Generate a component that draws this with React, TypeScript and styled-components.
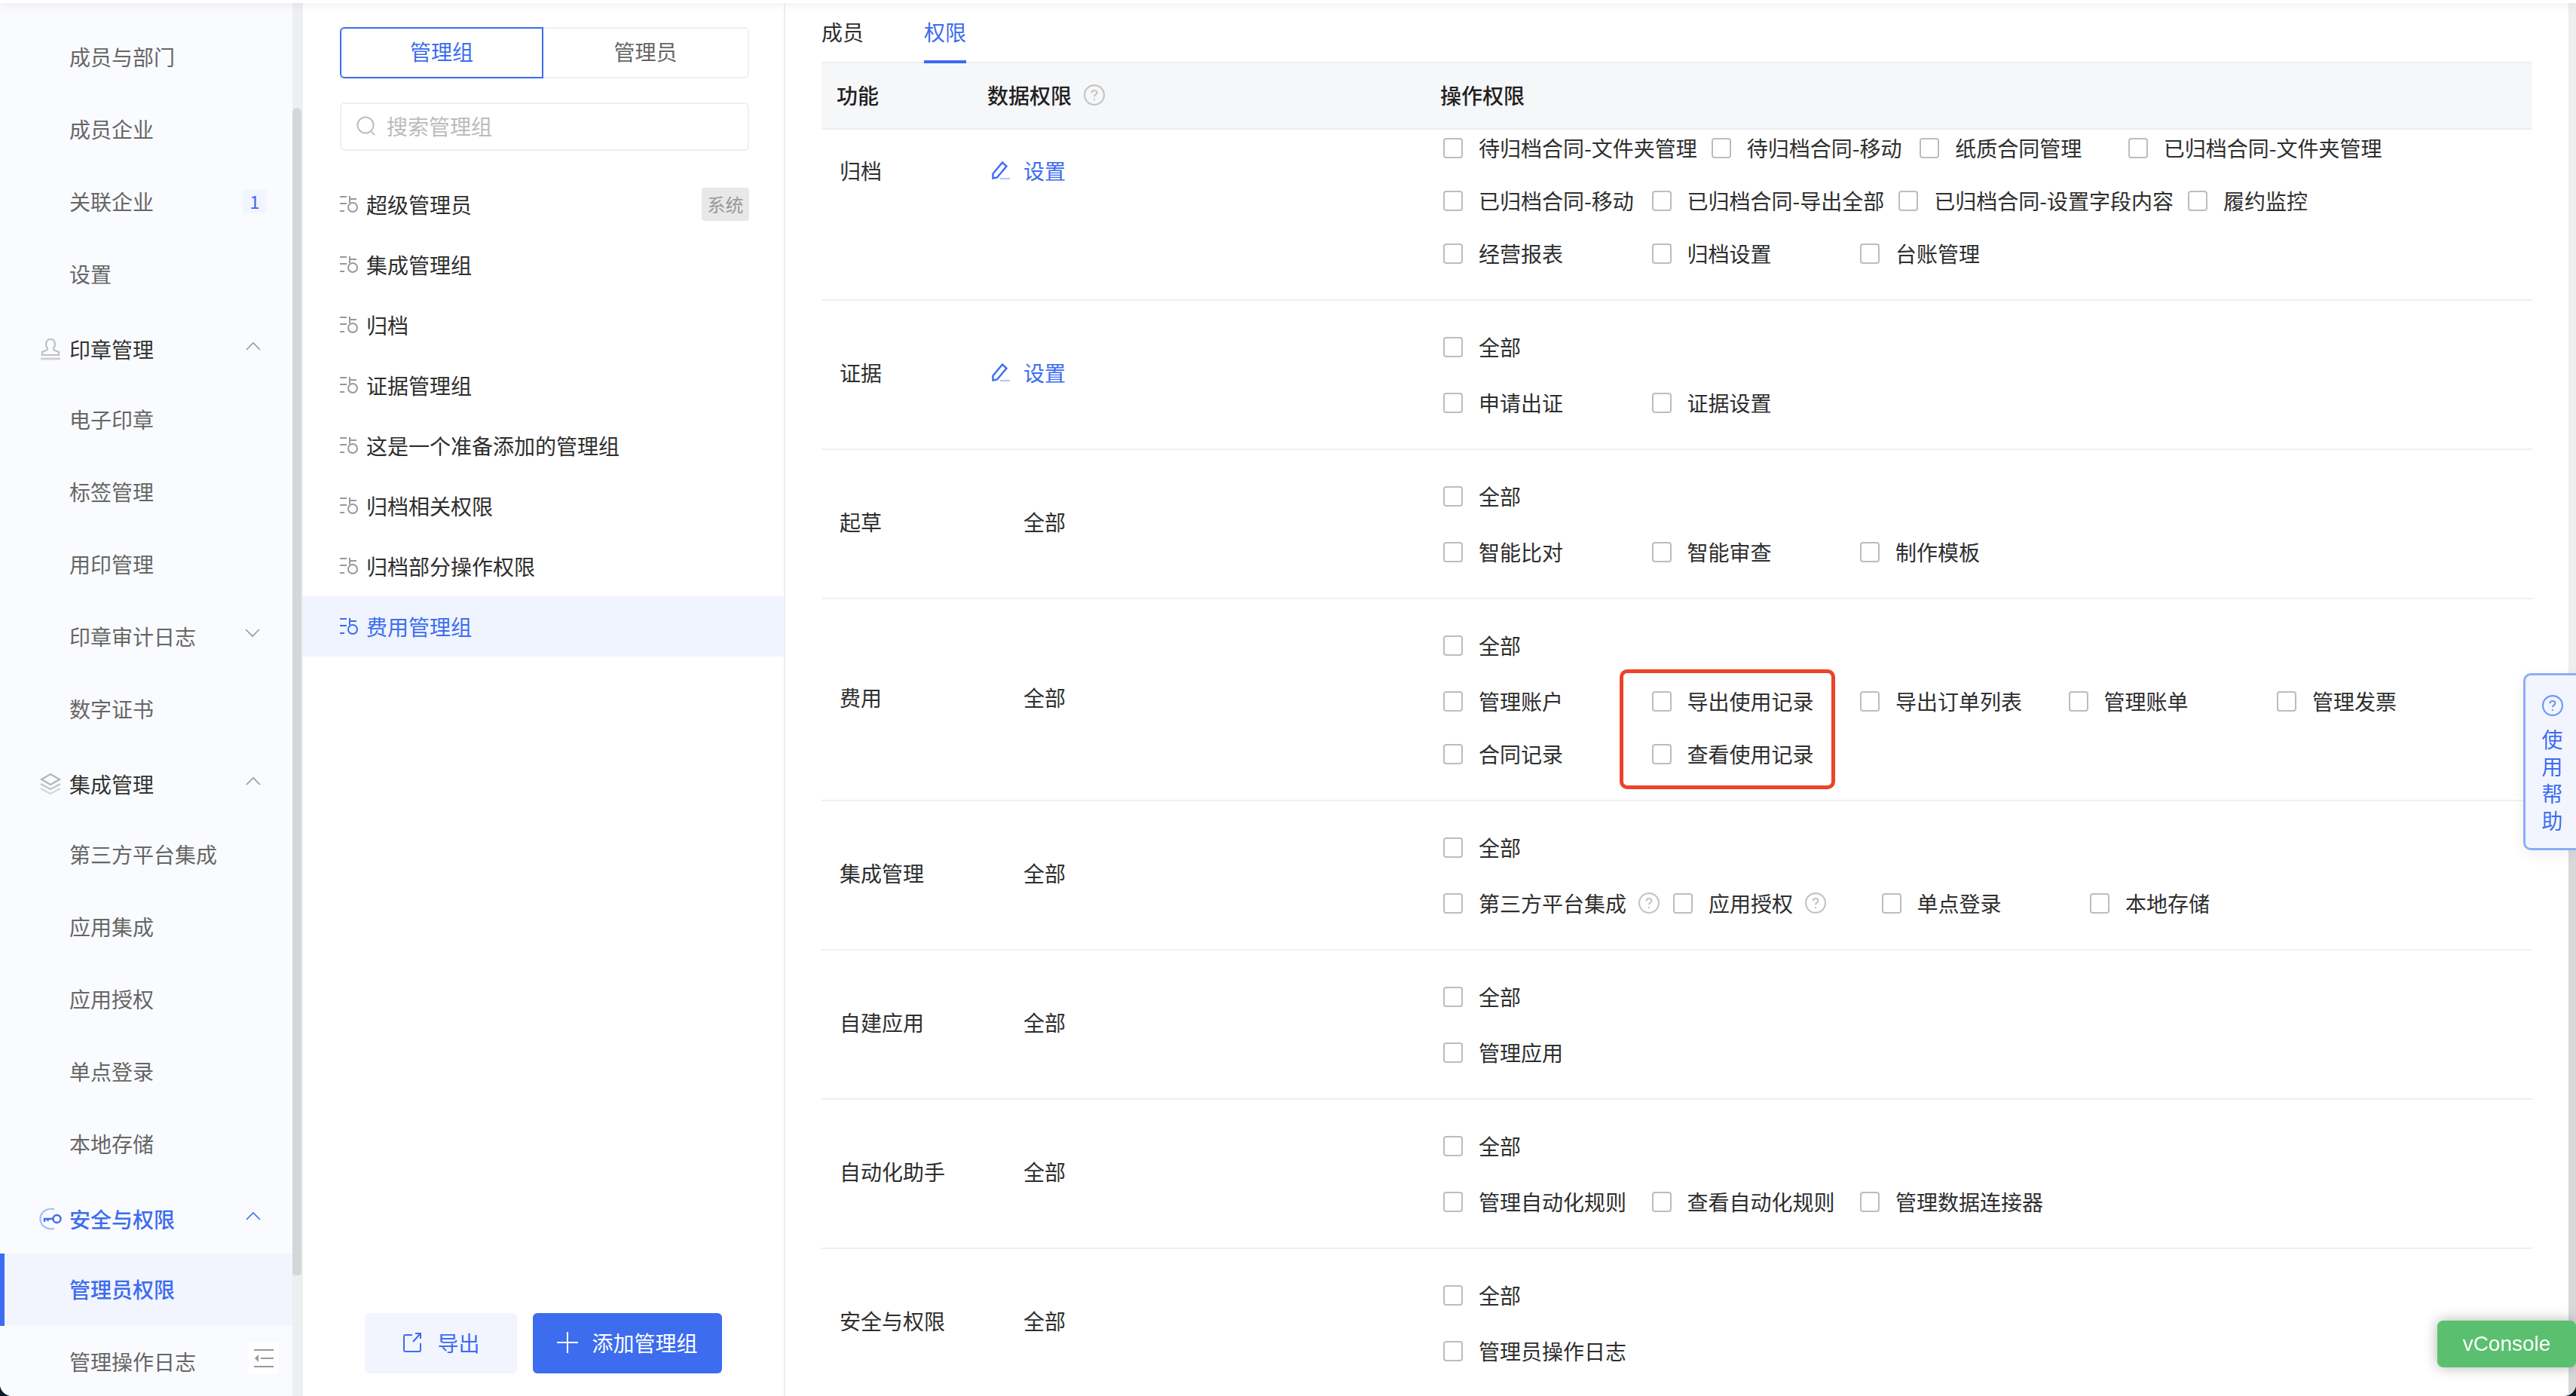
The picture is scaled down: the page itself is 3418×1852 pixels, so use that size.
import React from 'react'
import styled, { createGlobalStyle } from 'styled-components'

const BLUE = '#3c6cf0'
const LINE = '#eeeff3'

const GlobalStyle = createGlobalStyle`
  html, body {
    margin: 0;
    padding: 0;
    background: #0d1b26;
  }
  body {
    font-family: "Noto Sans CJK SC", "Noto Sans", sans-serif;
    font-size: 28px;
    line-height: 40px;
    color: #333;
  }
  * {
    box-sizing: border-box;
  }
`

const Page = styled.div`
  width: 3418px;
  height: 1852px;
  display: flex;
  flex-direction: column;
  background: #fff;
  overflow: hidden;
  border-radius: 0 0 16px 16px;
`

const TopBar = styled.div`
  height: 4px;
  flex: none;
  background: #fff;
  box-shadow: 0 2px 12px rgba(0, 0, 0, 0.12);
  position: relative;
  z-index: 2;
`

const Body = styled.div`
  flex: 1;
  min-height: 0;
  display: flex;
`

/* left nav */
const Sidebar = styled.nav`
  width: 388px;
  flex: none;
  padding-top: 24px;
  background: #fafbfe;
  position: relative;
  overflow: hidden;
`

const NavItem = styled.div<{ $active?: boolean }>`
  height: 96px;
  padding: 0 0 2px ${p => (p.$active ? 86 : 92)}px;
  display: flex;
  align-items: center;
  color: ${p => (p.$active ? BLUE : '#666')};
  font-weight: ${p => (p.$active ? 500 : 400)};
  background: ${p => (p.$active ? '#f2f5fd' : 'transparent')};
  border-left: ${p => (p.$active ? `6px solid ${BLUE}` : 'none')};
`

const NavBadge = styled.span`
  width: 32px;
  height: 32px;
  margin-left: 118px;
  border-radius: 4px;
  background: #f2f5fd;
  color: ${BLUE};
  font-size: 24px;
  line-height: 32px;
  text-align: center;
`

const NavGroup = styled.div<{ $active?: boolean }>`
  height: 97px;
  padding: 5px 0 0 52px;
  display: flex;
  align-items: center;
  color: ${p => (p.$active ? BLUE : '#333')};
  font-weight: ${p => (p.$active ? 500 : 400)};

  svg:first-child {
    width: 30px;
    height: 30px;
    margin-right: 10px;
    flex: none;
  }
`

const NavLabel = styled.span`
  flex: 1;
`

const Chevron = styled.svg<{ $down?: boolean; $blue?: boolean }>`
  width: 20px;
  height: 12px;
  margin: 0 42px 8px 0;
  flex: none;
  fill: none;
  stroke: ${p => (p.$blue ? BLUE : '#999')};
  stroke-width: 1.6;
  transform: ${p => (p.$down ? 'rotate(180deg)' : 'none')};
`

const DownChevron = styled(Chevron)`
  margin: 0 0 8px 65px;
`

const Collapse = styled.div`
  position: absolute;
  left: 330px;
  bottom: 30px;
  width: 40px;
  height: 41px;
  background: #fff;
  display: flex;
  align-items: center;
  justify-content: center;
`

const TrackSide = styled.div`
  width: 14px;
  flex: none;
  background: #eeeff1;
  display: flex;
  flex-direction: column;
`

const ThumbSide = styled.div`
  width: 12px;
  height: 1549px;
  margin-top: 139px;
  border-radius: 6px 6px 4px 4px;
  background: #d5d6d8;
`

const TrackPage = styled.div`
  width: 10px;
  flex: none;
  background: #eeeeee;
  display: flex;
  flex-direction: column;
`

const ThumbPage = styled.div`
  flex: 1;
  margin-top: 1000px;
  background: #d8d8d8;
`

/* admin group panel */
const Panel = styled.section`
  width: 640px;
  flex: none;
  padding-top: 32px;
  border-right: 2px solid ${LINE};
  display: flex;
  flex-direction: column;
`

const Segments = styled.div`
  margin: 0 46px 0 49px;
  display: flex;
  height: 68px;
`

const Segment = styled.div<{ $active?: boolean }>`
  flex: ${p => (p.$active ? '0 0 270px' : '1')};
  display: flex;
  align-items: center;
  justify-content: center;
  padding-bottom: 4px;
  border: 2px solid ${p => (p.$active ? BLUE : LINE)};
  border-left-width: ${p => (p.$active ? 2 : 0)}px;
  border-radius: ${p => (p.$active ? '6px 0 0 6px' : '0 6px 6px 0')};
  color: ${p => (p.$active ? BLUE : '#666')};
`

const Search = styled.div`
  margin: 32px 46px 0 49px;
  height: 64px;
  padding: 0 0 2px 20px;
  border: 2px solid ${LINE};
  border-radius: 6px;
  display: flex;
  align-items: center;
  gap: 14px;
  color: #bbb;

  svg {
    width: 26px;
    height: 26px;
    fill: none;
    stroke: #bdbdbd;
    stroke-width: 2;
  }
`

const GroupList = styled.div`
  flex: 1;
  margin-top: 31px;
`

const GroupRow = styled.div<{ $active?: boolean }>`
  height: 80px;
  padding: 0 46px 0 49px;
  display: flex;
  align-items: center;
  color: ${p => (p.$active ? BLUE : '#2e2e2e')};
  background: ${p => (p.$active ? '#f0f4fe' : 'transparent')};

  svg {
    width: 24px;
    height: 24px;
    margin-right: 11px;
    flex: none;
    fill: none;
    stroke: ${p => (p.$active ? BLUE : '#999')};
    stroke-width: 2;
  }
`

const SystemTag = styled.span`
  margin-left: auto;
  width: 63px;
  height: 44px;
  border-radius: 4px;
  background: #e8e8e8;
  color: #999;
  font-size: 24px;
  line-height: 44px;
  text-align: center;
`

const PanelFooter = styled.div`
  padding-bottom: 30px;
  display: flex;
  justify-content: center;
  gap: 21px;
`

const Button = styled.div<{ $primary?: boolean }>`
  height: 80px;
  padding: 0 ${p => (p.$primary ? 32 : 49)}px 2px;
  border-radius: 6px;
  display: flex;
  align-items: center;
  gap: 19px;
  color: ${p => (p.$primary ? '#fff' : BLUE)};
  background: ${p => (p.$primary ? '#3d6cef' : '#f2f5fd')};

  svg {
    width: 28px;
    height: 28px;
    fill: none;
    stroke: currentColor;
    stroke-width: 2;
  }
`

/* permissions */
const Main = styled.main`
  flex: 1;
  min-width: 0;
  padding: 0 48px;
  overflow: hidden;
`

const Tabs = styled.div`
  height: 80px;
  display: flex;
  gap: 80px;
  border-bottom: 2px solid ${LINE};
`

const Tab = styled.div<{ $active?: boolean }>`
  height: 80px;
  padding-top: 18px;
  color: ${p => (p.$active ? BLUE : '#2e2e2e')};
  border-bottom: 4px solid ${p => (p.$active ? BLUE : 'transparent')};
`

const TableHead = styled.div`
  height: 90px;
  margin-top: -2px;
  padding-bottom: 2px;
  display: grid;
  grid-template-columns: 220px 601px 1fr;
  align-items: center;
  background: #f6f7f9;
  border-top: 2px solid ${LINE};
  border-bottom: 2px solid ${LINE};
  color: #222;
  font-weight: 500;
`

const HeadCell = styled.div`
  display: flex;
  align-items: center;
  gap: 16px;

  &:first-child {
    padding-left: 20px;
  }
`

const Row = styled.div`
  display: grid;
  grid-template-columns: 220px 601px 1fr;
  align-items: center;
  border-bottom: 2px solid ${LINE};
`

const NameCell = styled.div<{ $top?: boolean }>`
  padding: 0 0 6px 24px;
  color: #2e2e2e;
  align-self: ${p => (p.$top ? 'start' : 'center')};
  margin-top: ${p => (p.$top ? 34 : 0)}px;
`

const DataCell = styled.div<{ $edit?: boolean; $top?: boolean }>`
  padding: 0 0 6px ${p => (p.$edit ? 6 : 48)}px;
  align-self: ${p => (p.$top ? 'start' : 'center')};
  margin-top: ${p => (p.$top ? 34 : 0)}px;
  display: flex;
  align-items: center;
  gap: 18px;
  color: ${p => (p.$edit ? BLUE : '#2e2e2e')};

  svg {
    width: 24px;
    height: 26px;
    flex: none;
  }
`

const OpsCell = styled.div<{ $tight?: boolean }>`
  position: relative;
  padding: ${p => (p.$tight ? 4 : 41)}px 0 41px 4px;
  display: flex;
  flex-direction: column;
`

const OpsAll = styled.div`
  height: 40px;
  margin-bottom: 34px;
  display: flex;
`

const OpsLine = styled.div`
  height: 40px;
  display: flex;

  & + & {
    margin-top: 30px;
  }
`

const Item = styled.label`
  min-width: 276.5px;
  padding-right: 19px;
  display: flex;
  align-items: center;
  color: #2e2e2e;
  white-space: nowrap;
`

const Box = styled.span`
  width: 26px;
  height: 27px;
  margin-right: 21px;
  flex: none;
  border: 2px solid #bdbdbd;
  border-radius: 4px;
  background: #fff;
`

const HelpMark = styled.svg`
  width: 28px;
  height: 28px;
  flex: none;
  fill: none;
  stroke: #c4c4c4;
  stroke-width: 2;
`

const ItemHelp = styled(HelpMark)`
  margin: 0 -1px 0 16px;
`

const Mark = styled.div`
  position: absolute;
  left: 238px;
  top: 93px;
  width: 286px;
  height: 159px;
  border: 5px solid #eb4427;
  border-radius: 10px;
  pointer-events: none;
`

/* floating */
const HelpFloat = styled.div`
  position: fixed;
  right: 0;
  top: 893px;
  width: 70px;
  height: 235px;
  padding: 26px 0 0 4px;
  background: #f2f5fe;
  border: 3px solid #8badf8;
  border-right: none;
  border-radius: 10px 0 0 10px;
  box-shadow: 0 6px 20px rgba(0, 0, 0, 0.06);
  color: ${BLUE};
  display: flex;
  flex-direction: column;
  align-items: center;
  line-height: 36px;
  z-index: 5;
`

const HelpFloatMark = styled(HelpMark)`
  margin-bottom: 12px;
  stroke: #6f95f5;
`

const VConsole = styled.div`
  position: fixed;
  right: 0;
  top: 1752px;
  width: 184px;
  height: 62px;
  border-radius: 8px;
  background: #5ac06f;
  box-shadow: 0 0 18px rgba(0, 0, 0, 0.3);
  color: #fff;
  font-family: "Liberation Sans", Arial, sans-serif;
  font-size: 28px;
  line-height: 62px;
  text-align: center;
  z-index: 6;
`

const ChevronUp = ({ blue }: { blue?: boolean }) => (
  <Chevron viewBox="0 0 20 12" $blue={blue}>
    <path d="M1 11 L10 2 L19 11" />
  </Chevron>
)

const Help = () => (
  <>
    <circle cx="13" cy="13" r="12" />
    <path d="M9.8 10.4 C9.8 8.4 11.2 7.4 13 7.4 C14.8 7.4 16.2 8.5 16.2 10.2 C16.2 12.4 13 12.6 13 15.2" />
    <path d="M13 17.6 V19.4" />
  </>
)

const StampIcon = () => (
  <svg viewBox="0 0 30 30" fill="none" stroke="#c0c0c2" strokeWidth="2.2">
    <path d="M10.5 13 C8 10 8.5 2 15 2 C21.5 2 22 10 19.5 13 C18.5 14.6 19 16 20 16.6 L26 19 V23 H4 V19 L10 16.6 C11 16 11.5 14.6 10.5 13 Z" />
    <path d="M2 28 H28" strokeWidth="3" stroke="#d2d2d4" />
  </svg>
)

const LayersIcon = () => (
  <svg viewBox="0 0 30 30" fill="none" stroke="#b4b4b6" strokeWidth="2.2">
    <path d="M15 2 L27 9 L15 16 L3 9 Z" />
    <path d="M2 15 L15 22 L28 15" stroke="#c2c2c4" />
    <path d="M2 21 L15 28 L28 21" stroke="#d6d6d8" />
  </svg>
)

const KeyIcon = () => (
  <svg viewBox="0 0 30 30" fill="none" strokeWidth="2.4">
    <path d="M20 2.6 C16 0.6 2 2 1.4 15 C2 28 16 29.6 20 27.4" stroke="#a9c0f8" />
    <circle cx="23.5" cy="15" r="5" stroke={BLUE} />
    <path d="M18.5 15 H7 V19 M11.5 15 V18" stroke={BLUE} />
  </svg>
)

const GroupIcon = () => (
  <svg viewBox="0 0 24 24">
    <path d="M0 2 H9 M0 11 H9 M0 21 H6" />
    <circle cx="17" cy="16" r="6" />
    <path d="M13 10 V1 M13 5 H22" />
  </svg>
)

const PencilIcon = () => (
  <svg viewBox="0 0 24 26" fill="none">
    <path d="M1.5 17.5 L14 2.5 L19.5 7.5 L7 22.5 L1.5 23.5 Z" stroke={BLUE} strokeWidth="2.4" />
    <path d="M11 24 H24" stroke="#b3c7f9" strokeWidth="2.2" />
  </svg>
)

const navTop = ['成员与部门', '成员企业', '关联企业', '设置']
const stampItems = ['电子印章', '标签管理', '用印管理', '印章审计日志', '数字证书']
const integrationItems = ['第三方平台集成', '应用集成', '应用授权', '单点登录', '本地存储']
const groups = ['超级管理员', '集成管理组', '归档', '证据管理组', '这是一个准备添加的管理组', '归档相关权限', '归档部分操作权限', '费用管理组']

type Perm = {
  name: string
  edit?: boolean
  top?: boolean
  all?: boolean
  mark?: boolean
  lines: string[][]
}

// labels ending in ? get a help mark
const perms: Perm[] = [
  {
    name: '归档',
    edit: true,
    top: true,
    lines: [
      ['待归档合同-文件夹管理', '待归档合同-移动', '纸质合同管理', '已归档合同-文件夹管理'],
      ['已归档合同-移动', '已归档合同-导出全部', '已归档合同-设置字段内容', '履约监控'],
      ['经营报表', '归档设置', '台账管理'],
    ],
  },
  { name: '证据', edit: true, all: true, lines: [['申请出证', '证据设置']] },
  { name: '起草', all: true, lines: [['智能比对', '智能审查', '制作模板']] },
  {
    name: '费用',
    all: true,
    mark: true,
    lines: [
      ['管理账户', '导出使用记录', '导出订单列表', '管理账单', '管理发票'],
      ['合同记录', '查看使用记录'],
    ],
  },
  { name: '集成管理', all: true, lines: [['第三方平台集成?', '应用授权?', '单点登录', '本地存储']] },
  { name: '自建应用', all: true, lines: [['管理应用']] },
  { name: '自动化助手', all: true, lines: [['管理自动化规则', '查看自动化规则', '管理数据连接器']] },
  { name: '安全与权限', all: true, lines: [['管理员操作日志']] },
]

const Option = ({ label }: { label: string }) => {
  const hasHelp = label.endsWith('?')
  return (
    <Item>
      <Box />
      {hasHelp ? label.slice(0, -1) : label}
      {hasHelp && (
        <ItemHelp viewBox="0 0 26 26">
          <Help />
        </ItemHelp>
      )}
    </Item>
  )
}

export default function App() {
  return (
    <Page>
      <GlobalStyle />
      <TopBar />
      <Body>
        <Sidebar>
          <NavItem>{navTop[0]}</NavItem>
          <NavItem>{navTop[1]}</NavItem>
          <NavItem>
            {navTop[2]}
            <NavBadge>1</NavBadge>
          </NavItem>
          <NavItem>{navTop[3]}</NavItem>

          <NavGroup>
            <StampIcon />
            <NavLabel>印章管理</NavLabel>
            <ChevronUp />
          </NavGroup>
          {stampItems.map(t => (
            <NavItem key={t}>
              {t}
              {t === '印章审计日志' && (
                <DownChevron viewBox="0 0 20 12" $down>
                  <path d="M1 11 L10 2 L19 11" />
                </DownChevron>
              )}
            </NavItem>
          ))}

          <NavGroup>
            <LayersIcon />
            <NavLabel>集成管理</NavLabel>
            <ChevronUp />
          </NavGroup>
          {integrationItems.map(t => (
            <NavItem key={t}>{t}</NavItem>
          ))}

          <NavGroup $active>
            <KeyIcon />
            <NavLabel>安全与权限</NavLabel>
            <ChevronUp blue />
          </NavGroup>
          <NavItem $active>管理员权限</NavItem>
          <NavItem>管理操作日志</NavItem>
          <Collapse>
            <svg width="28" height="26" viewBox="0 0 28 26" fill="none" stroke="#999" strokeWidth="2">
              <path d="M1 2 H27 M10 13 H27 M1 24 H27" />
              <path d="M7 8 L2 13 L7 18 Z" fill="#999" stroke="none" />
            </svg>
          </Collapse>
        </Sidebar>
        <TrackSide>
          <ThumbSide />
        </TrackSide>

        <Panel>
          <Segments>
            <Segment $active>管理组</Segment>
            <Segment>管理员</Segment>
          </Segments>
          <Search>
            <svg viewBox="0 0 26 26">
              <circle cx="12" cy="12" r="10.5" />
              <path d="M20 21 L24 25" />
            </svg>
            搜索管理组
          </Search>
          <GroupList>
            {groups.map((g, i) => (
              <GroupRow key={g} $active={i === groups.length - 1}>
                <GroupIcon />
                {g}
                {i === 0 && <SystemTag>系统</SystemTag>}
              </GroupRow>
            ))}
          </GroupList>
          <PanelFooter>
            <Button>
              <svg viewBox="0 0 28 28">
                <path d="M14 4 H5 C3.5 4 3 4.5 3 6 V24 C3 25.5 3.5 26 5 26 H23 C24.5 26 25 25.5 25 24 V15" />
                <path d="M15 13 L25 2 M18 2 H25 V9" />
              </svg>
              导出
            </Button>
            <Button $primary>
              <svg viewBox="0 0 28 28">
                <path d="M14 0 V28 M0 14 H28" />
              </svg>
              添加管理组
            </Button>
          </PanelFooter>
        </Panel>

        <Main>
          <Tabs>
            <Tab>成员</Tab>
            <Tab $active>权限</Tab>
          </Tabs>
          <TableHead>
            <HeadCell>功能</HeadCell>
            <HeadCell>
              数据权限
              <HelpMark viewBox="0 0 26 26">
                <Help />
              </HelpMark>
            </HeadCell>
            <HeadCell>操作权限</HeadCell>
          </TableHead>
          {perms.map(p => (
            <Row key={p.name}>
              <NameCell $top={p.top}>{p.name}</NameCell>
              <DataCell $edit={p.edit} $top={p.top}>
                {p.edit && <PencilIcon />}
                {p.edit ? '设置' : '全部'}
              </DataCell>
              <OpsCell $tight={!p.all}>
                {p.all && (
                  <OpsAll>
                    <Option label="全部" />
                  </OpsAll>
                )}
                {p.lines.map(line => (
                  <OpsLine key={line[0]}>
                    {line.map(l => (
                      <Option key={l} label={l} />
                    ))}
                  </OpsLine>
                ))}
                {p.mark && <Mark />}
              </OpsCell>
            </Row>
          ))}
        </Main>
        <TrackPage>
          <ThumbPage />
        </TrackPage>
      </Body>

      <HelpFloat>
        <HelpFloatMark viewBox="0 0 26 26">
          <Help />
        </HelpFloatMark>
        <span>使</span>
        <span>用</span>
        <span>帮</span>
        <span>助</span>
      </HelpFloat>
      <VConsole>vConsole</VConsole>
    </Page>
  )
}
